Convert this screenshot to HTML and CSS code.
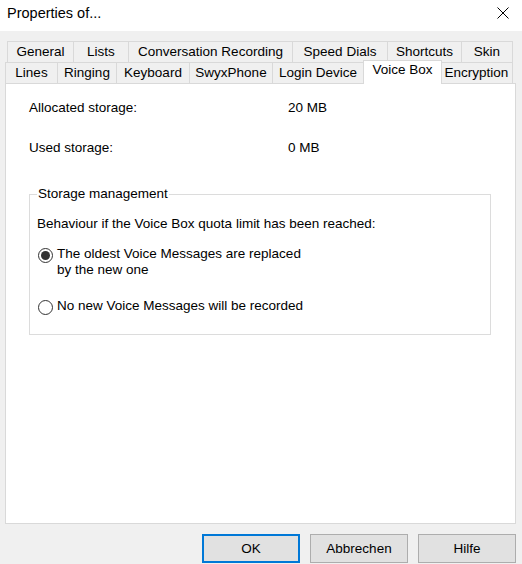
FILE: index.html
```html
<!DOCTYPE html>
<html lang="en">
<head>
    <meta charset="UTF-8">
    <meta name="viewport" content="width=device-width, initial-scale=1.0">
    <title>Properties of...</title>
    <link rel="stylesheet" href="styles.css">
</head>
<body>
    <div class="dialog">
        <div class="titlebar">
            <span class="title">Properties of...</span>
            <svg class="close" width="12" height="12" viewBox="0 0 12 12">
                <path d="M0.5 0.5 L11.5 11.5 M11.5 0.5 L0.5 11.5" stroke="#000" stroke-width="1" fill="none"/>
            </svg>
        </div>

        <div class="tabs">
            <div class="tab-row row-top">
                <div class="tab">General</div>
                <div class="tab">Lists</div>
                <div class="tab">Conversation Recording</div>
                <div class="tab">Speed Dials</div>
                <div class="tab">Shortcuts</div>
                <div class="tab">Skin</div>
            </div>
            <div class="tab-row row-bottom">
                <div class="tab">Lines</div>
                <div class="tab">Ringing</div>
                <div class="tab">Keyboard</div>
                <div class="tab">SwyxPhone</div>
                <div class="tab">Login Device</div>
                <div class="tab active">Voice Box</div>
                <div class="tab">Encryption</div>
            </div>
        </div>

        <div class="panel">
            <div class="info-row">
                <span class="label">Allocated storage:</span>
                <span class="value">20 MB</span>
            </div>
            <div class="info-row">
                <span class="label">Used storage:</span>
                <span class="value">0 MB</span>
            </div>

            <fieldset class="group">
                <legend>Storage management</legend>
                <p class="hint">Behaviour if the Voice Box quota limit has been reached:</p>
                <label class="radio first">
                    <span class="dot checked"></span>
                    <span>The oldest Voice Messages are replaced<br>by the new one</span>
                </label>
                <label class="radio">
                    <span class="dot"></span>
                    <span>No new Voice Messages will be recorded</span>
                </label>
            </fieldset>
        </div>

        <div class="buttons">
            <button class="btn default">OK</button>
            <button class="btn">Abbrechen</button>
            <button class="btn">Hilfe</button>
        </div>
    </div>
</body>
</html>
```

FILE: styles.css
```css
* {
    box-sizing: border-box;
}

body {
    margin: 0;
    font-family: "Liberation Sans", Arial, sans-serif;
    font-size: 13.5px;
    color: #000;
}

.dialog {
    width: 522px;
    height: 564px;
    background-color: #f0f0f0;
    overflow: hidden;
}

.titlebar {
    height: 31px;
    background-color: #fff;
    display: flex;
    justify-content: space-between;
    align-items: flex-start;
    padding: 4px 13px 0 7px;
}

.title {
    font-size: 14.5px;
    line-height: 18px;
}

.close {
    margin-top: 3px;
}

/* two stacked rows of tabs */
.tabs {
    margin-top: 10px;
}

.tab-row {
    display: grid;
    height: 21px;
}

.row-top {
    margin-left: 7px;
    grid-template-columns: 67px 55px 164px 95px 74px 51px;
}

.row-bottom {
    margin-left: 5px;
    grid-template-columns: 53px 59px 73px 83px 91px 77px 72px;
}

.tab {
    border-top: 1px solid #d9d9d9;
    border-right: 1px solid #d9d9d9;
    background-color: #f0f0f0;
    text-align: center;
    line-height: 20px;
    white-space: nowrap;
}

.tab:first-child {
    border-left: 1px solid #d9d9d9;
}

.tab.active {
    background-color: #fff;
    margin: -2px -1px -1px -1px;
    border-left: 1px solid #d9d9d9;
    line-height: 18px;
    z-index: 1;
}

.panel {
    margin-left: 5px;
    width: 511px;
    height: 441px;
    background-color: #fff;
    border: 1px solid #d9d9d9;
    padding: 16px 0 0 23px;
}

.info-row {
    display: flex;
    line-height: 16px;
    margin-bottom: 24px;
}

.label {
    width: 259px;
}

/* margin collapses with the row above, so this is the full gap */
.group {
    margin: 30px 0 0 0;
    width: 462px;
    border: 1px solid #dcdcdc;
    padding: 0 0 19px 7px;
}

.group legend {
    padding: 0 1px;
    margin-left: 0;
    line-height: 16px;
}

.hint {
    margin: 14px 0 0 0;
    line-height: 16px;
}

.radio {
    display: flex;
    align-items: flex-start;
    line-height: 16px;
    margin-top: 20px;
}

.radio.first {
    margin-top: 14px;
}

.dot {
    width: 15px;
    height: 15px;
    border: 1px solid #333;
    border-radius: 50%;
    margin: 2px 4px 0 1px;
    flex-shrink: 0;
    display: flex;
    align-items: center;
    justify-content: center;
}

.dot.checked::after {
    content: "";
    width: 9px;
    height: 9px;
    border-radius: 50%;
    background-color: #333;
}

.buttons {
    display: flex;
    justify-content: flex-end;
    gap: 10px;
    margin-top: 10px;
    padding-right: 6px;
}

.btn {
    width: 98px;
    height: 29px;
    font-family: inherit;
    font-size: 13.5px;
    color: #000;
    background-color: #e1e1e1;
    border: 1px solid #adadad;
    padding: 0;
}

.btn.default {
    border: 2px solid #0078d7;
}
```
